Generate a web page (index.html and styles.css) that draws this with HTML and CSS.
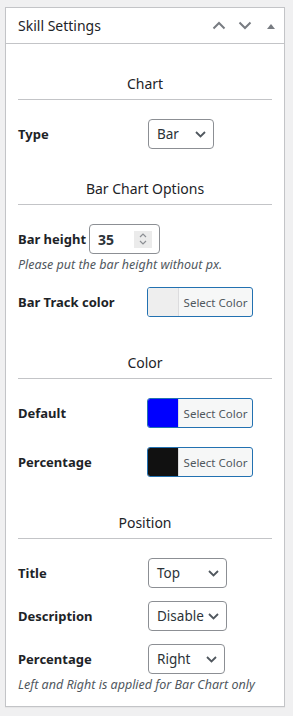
FILE: index.html
```html
<!DOCTYPE html>
<html lang="en">

<head>
    <meta charset="UTF-8">
    <meta name="viewport" content="width=device-width, initial-scale=1.0">
    <title>Skill Settings</title>
    <link rel="stylesheet" href="styles.css">
</head>

<body>

    <div class="postbox">
        <div class="postbox-header">
            <h2 class="postbox-title">Skill Settings</h2>
            <div class="handle-actions">
                <span class="handle-btn">
                    <svg width="14" height="9" viewBox="0 0 14 9"><polyline points="1.5,7.5 7,2 12.5,7.5" fill="none" stroke="#787c82" stroke-width="2"/></svg>
                </span>
                <span class="handle-btn">
                    <svg width="14" height="9" viewBox="0 0 14 9"><polyline points="1.5,1.5 7,7 12.5,1.5" fill="none" stroke="#787c82" stroke-width="2"/></svg>
                </span>
                <span class="handle-btn">
                    <svg width="8" height="6" viewBox="0 0 8 6"><polygon points="0,6 4,1 8,6" fill="#787c82"/></svg>
                </span>
            </div>
        </div>

        <div class="inside">
            <h3 class="section-title">Chart</h3>
            <div class="field-row">
                <label class="field-label">Type</label>
                <div class="select select-type">
                    <span>Bar</span>
                    <svg class="chevron" width="11" height="7" viewBox="0 0 11 7"><polyline points="1,1 5.5,5.5 10,1" fill="none" stroke="#50575e" stroke-width="1.8"/></svg>
                </div>
            </div>

            <h3 class="section-title">Bar Chart Options</h3>
            <div class="field-row">
                <label class="field-label inline">Bar height</label>
                <div class="number-input">
                    <span>35</span>
                    <span class="spinner">
                        <svg width="10" height="14" viewBox="0 0 10 14">
                            <polyline points="2,5 5,2 8,5" fill="none" stroke="#8c8f94" stroke-width="1.2"/>
                            <polyline points="2,9 5,12 8,9" fill="none" stroke="#8c8f94" stroke-width="1.2"/>
                        </svg>
                    </span>
                </div>
            </div>
            <p class="description">Please put the bar height without px.</p>
            <div class="field-row color-row row-track">
                <label class="field-label">Bar Track color</label>
                <button class="color-button"><span class="swatch swatch-track"></span><span class="color-text">Select Color</span></button>
            </div>

            <h3 class="section-title spaced">Color</h3>
            <div class="field-row color-row">
                <label class="field-label">Default</label>
                <button class="color-button"><span class="swatch swatch-blue"></span><span class="color-text">Select Color</span></button>
            </div>
            <div class="field-row color-row">
                <label class="field-label">Percentage</label>
                <button class="color-button"><span class="swatch swatch-black"></span><span class="color-text">Select Color</span></button>
            </div>

            <h3 class="section-title spaced">Position</h3>
            <div class="field-row">
                <label class="field-label">Title</label>
                <div class="select select-wide">
                    <span>Top</span>
                    <svg class="chevron" width="11" height="7" viewBox="0 0 11 7"><polyline points="1,1 5.5,5.5 10,1" fill="none" stroke="#50575e" stroke-width="1.8"/></svg>
                </div>
            </div>
            <div class="field-row tight">
                <label class="field-label">Description</label>
                <div class="select select-wide">
                    <span>Disable</span>
                    <svg class="chevron" width="11" height="7" viewBox="0 0 11 7"><polyline points="1,1 5.5,5.5 10,1" fill="none" stroke="#50575e" stroke-width="1.8"/></svg>
                </div>
            </div>
            <div class="field-row tight">
                <label class="field-label">Percentage</label>
                <div class="select select-right">
                    <span>Right</span>
                    <svg class="chevron" width="11" height="7" viewBox="0 0 11 7"><polyline points="1,1 5.5,5.5 10,1" fill="none" stroke="#50575e" stroke-width="1.8"/></svg>
                </div>
            </div>
            <p class="description">Left and Right is applied for Bar Chart only</p>
        </div>
    </div>

</body>

</html>
```

FILE: styles.css
```css
body {
    margin: 0;
    background-color: #f0f0f1;
    font-family: "Noto Sans", "Open Sans", sans-serif;
    font-size: 13px;
    color: #1d2327;
}

.postbox {
    margin: 7px 8px 9px 5px;
    background-color: #fff;
    border: 1px solid #c3c4c7;
    box-shadow: 0 1px 1px rgba(0, 0, 0, 0.04);
}

.postbox-header {
    height: 35px;
    display: flex;
    align-items: center;
    justify-content: space-between;
    padding-left: 12px;
    border-bottom: 1px solid #c3c4c7;
}

.postbox-title {
    margin: 0;
    font-size: 14px;
    font-weight: 400;
    line-height: 20px;
}

.handle-actions {
    display: flex;
    align-items: center;
}

.handle-btn {
    width: 26px;
    height: 35px;
    display: flex;
    align-items: center;
    justify-content: center;
}

.inside {
    padding: 0 12px 13px;
}

.section-title {
    margin: 30px 0 0;
    padding-bottom: 5px;
    border-bottom: 1px solid #c3c4c7;
    text-align: center;
    font-size: 14px;
    font-weight: 400;
    line-height: 20px;
}

.section-title.spaced {
    margin-top: 36px;
}

.field-row {
    display: flex;
    align-items: center;
    height: 30px;
    margin-top: 19px;
}

.field-row.tight {
    margin-top: 13px;
}

.row-track {
    margin-top: 14px;
}

.field-label {
    width: 130px;
    flex-shrink: 0;
    font-size: 13px;
    font-weight: 700;
}

.field-label.inline {
    width: auto;
    margin-right: 3px;
}

.color-row .field-label {
    width: 129px;
}

.select {
    height: 30px;
    box-sizing: border-box;
    display: flex;
    align-items: center;
    justify-content: space-between;
    padding: 0 7px 0 8px;
    border: 1px solid #8c8f94;
    border-radius: 4px;
    font-size: 13.5px;
    color: #2c3338;
    background-color: #fff;
}

.select-type {
    width: 66px;
}

.select-wide {
    width: 79px;
}

.select-right {
    width: 77px;
}

.number-input {
    width: 71px;
    height: 30px;
    box-sizing: border-box;
    display: flex;
    align-items: center;
    justify-content: space-between;
    padding: 0 7px 0 8px;
    border: 1px solid #8c8f94;
    border-radius: 4px;
    font-size: 14px;
    font-weight: 700;
    color: #2c3338;
}

.spinner {
    width: 18px;
    height: 17px;
    display: flex;
    align-items: center;
    justify-content: center;
    background-color: #ebebeb;
}

.description {
    margin: 3px 0 0;
    font-size: 12.5px;
    font-style: italic;
    line-height: 16px;
    color: #50575e;
}

.color-button {
    width: 106px;
    height: 30px;
    display: flex;
    padding: 0;
    border: 1px solid #2271b1;
    border-radius: 3px;
    background-color: #f6f7f7;
    overflow: hidden;
    font-family: inherit;
    cursor: pointer;
}

.swatch {
    width: 30px;
    height: 100%;
    border-right: 1px solid #dcdcde;
}

.swatch-track {
    background-color: #eeeeee;
}

.swatch-blue {
    background-color: #0000ff;
}

.swatch-black {
    background-color: #111111;
}

.color-text {
    flex: 1;
    align-self: center;
    text-align: center;
    font-size: 11.5px;
    color: #50575e;
}
```
